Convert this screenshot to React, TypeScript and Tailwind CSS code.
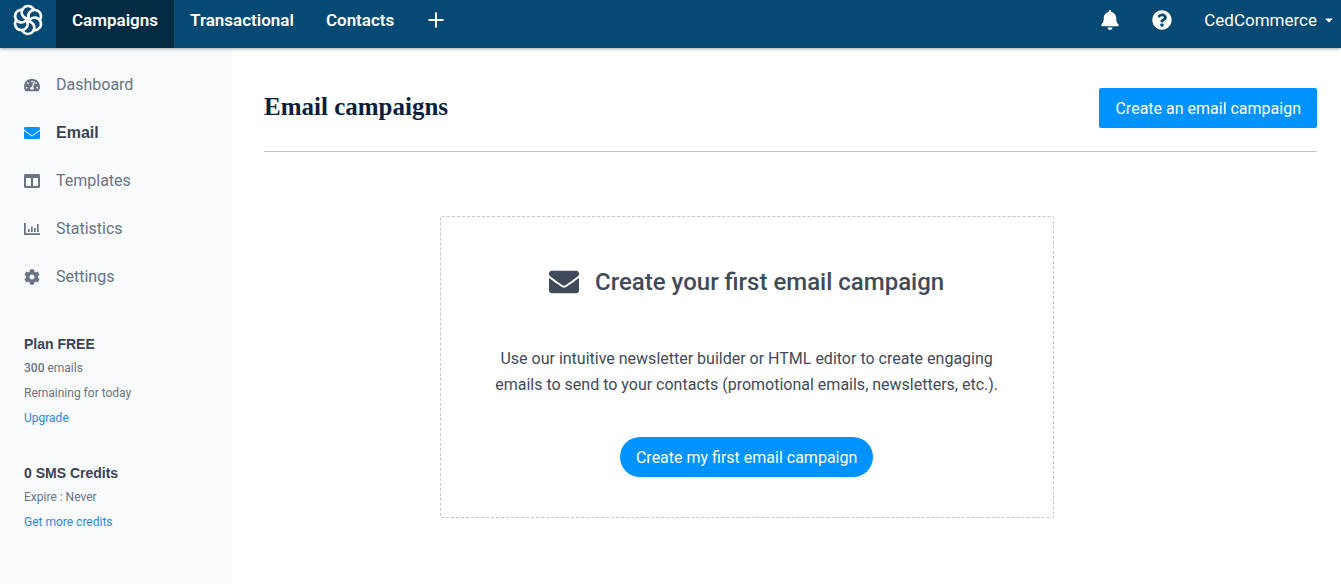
import type { ComponentType } from 'react'
import {
  FaBell,
  FaCaretDown,
  FaCog,
  FaColumns,
  FaEnvelope,
  FaQuestionCircle,
  FaTachometerAlt,
} from 'react-icons/fa'

interface SideItem {
  label: string
  icon: ComponentType<{ className?: string }>
  active?: boolean
}

const TABS = ['Campaigns', 'Transactional', 'Contacts']

const SIDE_ITEMS: SideItem[] = [
  { label: 'Dashboard', icon: FaTachometerAlt },
  { label: 'Email', icon: FaEnvelope, active: true },
  { label: 'Templates', icon: FaColumns },
  { label: 'Statistics', icon: BarsIcon },
  { label: 'Settings', icon: FaCog },
]

const PETALS = [30, 90, 150, 210, 270, 330]

function Logo() {
  return (
    <svg viewBox="-16 -16 32 32" className="h-8 w-8" fill="none" stroke="currentColor" strokeWidth={2.6} strokeLinecap="round">
      {PETALS.map((angle) => (
        <path key={angle} d="M1.45 -0.84A6.3 6.3 0 1 1 10.1 5.83" transform={`rotate(${angle})`} />
      ))}
    </svg>
  )
}

function BarsIcon({ className }: { className?: string }) {
  return (
    <svg viewBox="0 0 16 16" className={className} fill="currentColor">
      <path d="M0 2h1.8v10.2H16V14H0z" />
      <path d="M4 8h1.7v3H4zM7 5.5h1.7V11H7zM10 7h1.7v4H10zM13 3h1.7v8H13z" />
    </svg>
  )
}

function TopBar() {
  return (
    <header className="relative flex h-12 items-stretch bg-[#044a75] text-[17px] leading-6 text-white shadow-[0_1px_3px_rgba(0,0,0,0.35)]">
      <a href="#" aria-label="Home" className="flex w-14 justify-center pt-1">
        <Logo />
      </a>
      <nav className="flex">
        {TABS.map((tab, i) => (
          <a
            key={tab}
            href="#"
            className={`px-4 pt-2 font-semibold ${i === 0 ? 'bg-[#032b44]' : ''}`}
          >
            {tab}
          </a>
        ))}
      </nav>
      <button type="button" aria-label="Add" className="flex w-13 justify-center pt-3">
        <svg viewBox="0 0 16 16" className="h-4 w-4" stroke="currentColor" strokeWidth={2}>
          <path d="M8 0.5v15M0.5 8h15" />
        </svg>
      </button>
      <div className="ml-auto flex items-start gap-8 pt-2 pr-1.5">
        <button type="button" aria-label="Notifications" className="flex h-6 items-center">
          <FaBell className="h-5 w-5" />
        </button>
        <button type="button" aria-label="Help" className="flex h-6 items-center">
          <FaQuestionCircle className="h-5 w-5" />
        </button>
        <button type="button" className="flex h-6 items-center gap-1.5">
          CedCommerce
          <FaCaretDown className="h-3 w-3" />
        </button>
      </div>
    </header>
  )
}

function SideBar() {
  return (
    <aside className="w-58 shrink-0 bg-[#f8fafc] px-6 pt-[25px] text-[#687484]">
      <nav className="space-y-6">
        {SIDE_ITEMS.map(({ label, icon: Icon, active }) => (
          <a key={label} href="#" className="flex items-center gap-4 text-base leading-6">
            <Icon className={`h-4 w-4 ${active ? 'text-[#0092ff]' : ''}`} />
            <span className={active ? "font-['Liberation_Sans',sans-serif] font-bold text-[#3b4354]" : ''}>{label}</span>
          </a>
        ))}
      </nav>

      <section className="mt-[43px] text-xs leading-[25px]">
        <h2 className="font-['Liberation_Sans',sans-serif] text-sm leading-6 font-bold text-[#3b4354]">Plan FREE</h2>
        <p>
          <strong className="font-medium">300</strong> emails
        </p>
        <p>Remaining for today</p>
        <a href="#" className="text-[#2f86e6]">Upgrade</a>
      </section>

      <section className="mt-[30px] text-xs leading-[25px]">
        <h2 className="font-['Liberation_Sans',sans-serif] text-sm leading-6 font-bold text-[#3b4354]">0 SMS Credits</h2>
        <p>Expire : Never</p>
        <a href="#" className="text-[#2f86e6]">Get more credits</a>
      </section>
    </aside>
  )
}

export default function App() {
  return (
    <div className="flex min-h-screen flex-col bg-white font-['Roboto',sans-serif]">
      <TopBar />
      <div className="flex flex-1">
        <SideBar />
        <main className="flex-1 pt-10 pr-6 pl-8">
          <div className="flex items-start justify-between border-b border-[#c0c5cb] pb-[23px]">
            <h1 className="font-['Liberation_Serif',serif] text-[25px] leading-[38px] font-bold text-[#0b1f3c]">
              Email campaigns
            </h1>
            <button type="button" className="h-10 rounded-xs bg-[#0092ff] px-4 pt-px text-base text-white">
              Create an email campaign
            </button>
          </div>

          <div className="mt-16 grid grid-cols-12">
            <section className="col-span-7 col-start-3 flex flex-col items-center rounded-xs border border-dashed border-[#c3c6ca] px-8 pt-[49px] pb-10 text-[#3f4a5a]">
              <h2 className="flex items-center gap-4 text-2xl leading-8 font-medium">
                <FaEnvelope className="h-[30px] w-[30px]" />
                Create your first email campaign
              </h2>
              <p className="mt-12 max-w-[520px] text-center text-base leading-[26px]">
                Use our intuitive newsletter builder or HTML editor to create engaging emails to send to your contacts
                (promotional emails, newsletters, etc.).
              </p>
              <button type="button" className="mt-[39px] h-10 rounded-full bg-[#0092ff] px-4 pt-px text-base text-white">
                Create my first email campaign
              </button>
            </section>
          </div>
        </main>
      </div>
    </div>
  )
}
